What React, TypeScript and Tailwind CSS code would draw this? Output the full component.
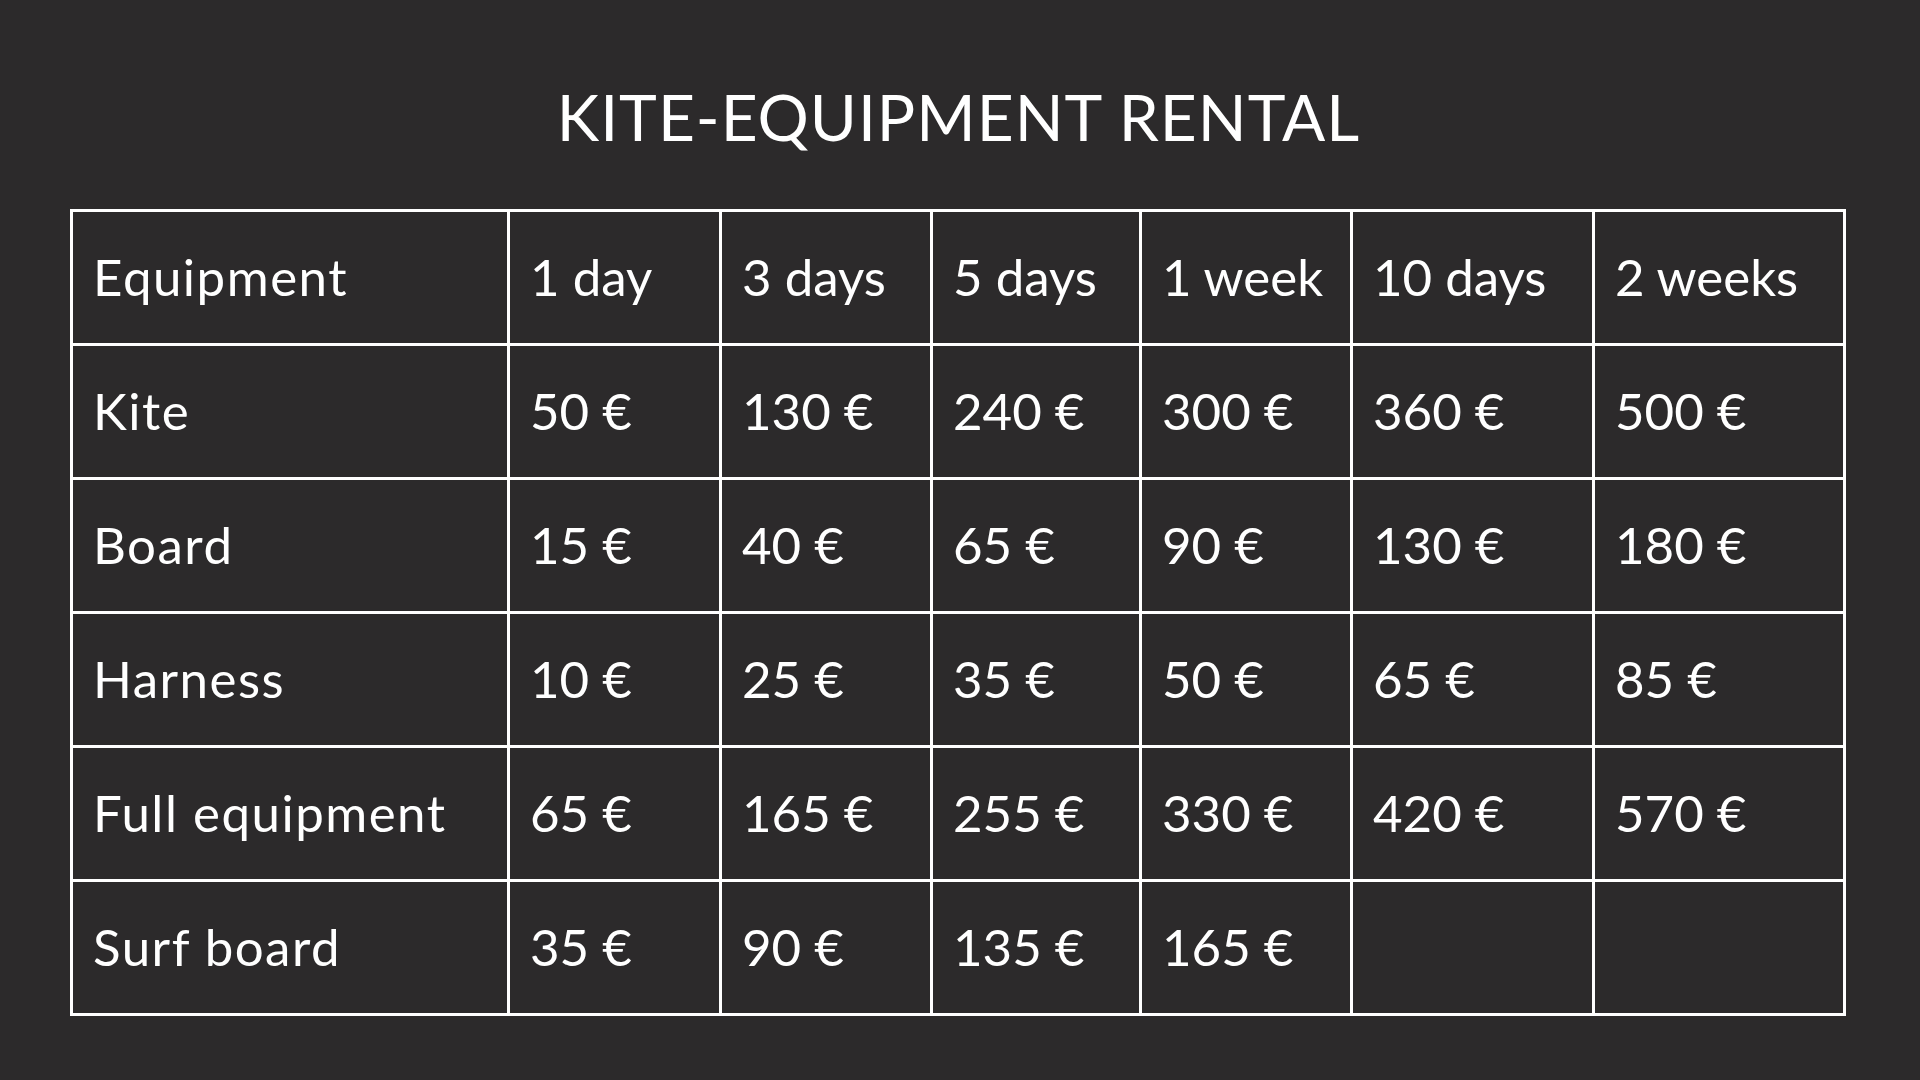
const headers = ['Equipment', '1 day', '3 days', '5 days', '1 week', '10 days', '2 weeks'];

const rows: string[][] = [
  ['Kite', '50 €', '130 €', '240 €', '300 €', '360 €', '500 €'],
  ['Board', '15 €', '40 €', '65 €', '90 €', '130 €', '180 €'],
  ['Harness', '10 €', '25 €', '35 €', '50 €', '65 €', '85 €'],
  ['Full equipment', '65 €', '165 €', '255 €', '330 €', '420 €', '570 €'],
  ['Surf board', '35 €', '90 €', '135 €', '165 €', '', ''],
];

const widths = [437, 212, 211, 209, 211, 242, 251];

export default function App() {
  return (
    <div
      className="flex h-[1080px] w-[1920px] flex-col bg-[#2c2a2b] text-white"
      style={{ fontFamily: 'Lato, "Open Sans", sans-serif' }}
    >
      <h1 className="mt-[82px] self-center pr-[3px] text-[64px] leading-[70px] font-normal tracking-[1px]">
        KITE-EQUIPMENT RENTAL
      </h1>

      <table className="mt-[57px] ml-[70px] w-[1774px] table-fixed border-collapse border-[3px] border-white">
        <colgroup>
          {widths.map((w, i) => (
            <col key={i} style={{ width: w }} />
          ))}
        </colgroup>
        <thead>
          <tr className="h-[134px]">
            {headers.map((h, i) => (
              <th
                key={h}
                className={
                  i === 0
                    ? 'border-[3px] border-white px-[20px] text-left align-middle text-[51px] font-normal tracking-[1.5px] whitespace-nowrap'
                    : 'border-[3px] border-white px-[20px] text-left align-middle text-[51px] font-normal whitespace-nowrap'
                }
              >
                {h}
              </th>
            ))}
          </tr>
        </thead>
        <tbody>
          {rows.map((r) => (
            <tr key={r[0]} className="h-[134px]">
              {r.map((c, i) => (
                <td
                  key={i}
                  className={
                    i === 0
                      ? 'border-[3px] border-white px-[20px] align-middle text-[51px] font-normal tracking-[1.5px] whitespace-nowrap'
                      : 'border-[3px] border-white px-[20px] align-middle text-[51px] font-normal whitespace-nowrap'
                  }
                >
                  {c}
                </td>
              ))}
            </tr>
          ))}
        </tbody>
      </table>
    </div>
  );
}
